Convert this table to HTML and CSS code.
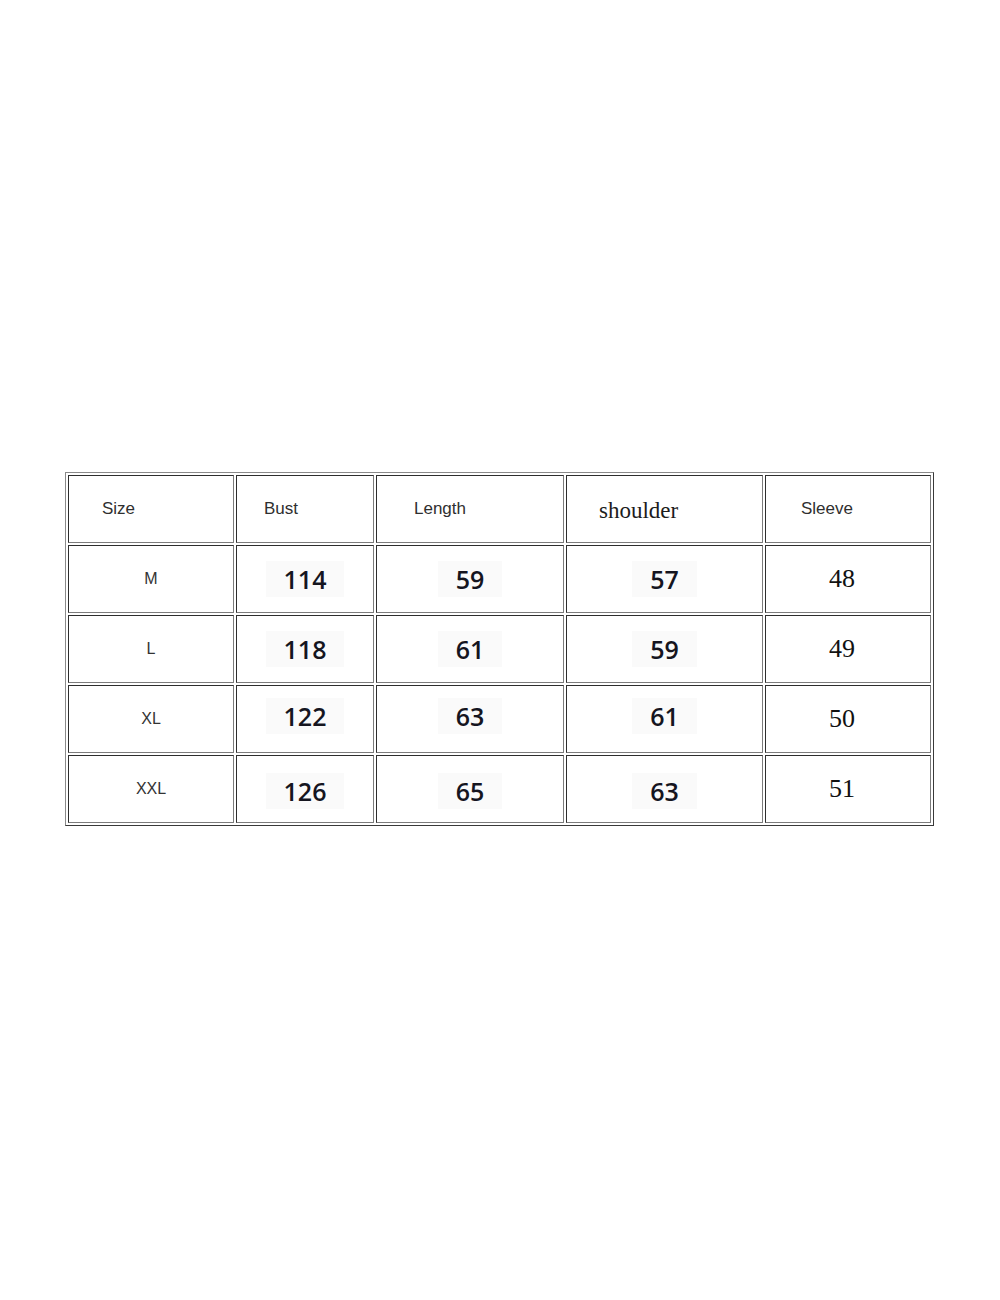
FILE: index.html
```html
<!DOCTYPE html>
<html>
<head>
<meta charset="utf-8">
<link rel="stylesheet" href="styles.css">
</head>
<body>
<div class="page">
<table class="sizes">
  <tr class="head">
    <td class="c1"><span class="h h-size">Size</span></td>
    <td class="c2"><span class="h h-bust">Bust</span></td>
    <td class="c3"><span class="h h-length">Length</span></td>
    <td class="c4"><span class="h-shoulder">shoulder</span></td>
    <td class="c5"><span class="h h-sleeve">Sleeve</span></td>
  </tr>
  <tr>
    <td class="c1 sz">M</td>
    <td class="c2"><span class="num">114</span></td>
    <td class="c3"><span class="num">59</span></td>
    <td class="c4"><span class="num">57</span></td>
    <td class="c5 serifnum">48</td>
  </tr>
  <tr>
    <td class="c1 sz">L</td>
    <td class="c2"><span class="num">118</span></td>
    <td class="c3"><span class="num">61</span></td>
    <td class="c4"><span class="num">59</span></td>
    <td class="c5 serifnum">49</td>
  </tr>
  <tr class="up">
    <td class="c1 sz">XL</td>
    <td class="c2"><span class="num">122</span></td>
    <td class="c3"><span class="num">63</span></td>
    <td class="c4"><span class="num">61</span></td>
    <td class="c5 serifnum">50</td>
  </tr>
  <tr class="down">
    <td class="c1 sz">XXL</td>
    <td class="c2"><span class="num">126</span></td>
    <td class="c3"><span class="num">65</span></td>
    <td class="c4"><span class="num">63</span></td>
    <td class="c5 serifnum">51</td>
  </tr>
</table>
</div>
</body>
</html>
```
FILE: styles.css
```css
html, body {
  margin: 0;
  padding: 0;
  background: #ffffff;
}
.page {
  padding: 472px 0 0 65px;
}
.sizes {
  border-collapse: separate;
  border-spacing: 2px;
  border-top: 1px solid #8a8a8a;
  border-left: 1px solid #8a8a8a;
  border-right: 1px solid #3a3a3a;
  border-bottom: 1px solid #3a3a3a;
  table-layout: fixed;
  width: 869px;
}
.sizes td {
  border-top: 1px solid #2e2e2e;
  border-left: 1px solid #2e2e2e;
  border-right: 1px solid #7c7c7c;
  border-bottom: 1px solid #7c7c7c;
  height: 68px;
  padding: 0;
  text-align: center;
  vertical-align: middle;
  box-sizing: border-box;
}
.c1 { width: 166px; }
.c2 { width: 138px; }
.c3 { width: 188px; }
.c4 { width: 197px; }
.c5 { width: 166px; }

.head td { text-align: left; }
.h {
  font-family: "Liberation Sans", Arial, sans-serif;
  font-size: 17px;
  color: #2f2f2f;
}
.h-size { padding-left: 33px; }
.h-bust { padding-left: 27px; }
.h-length { padding-left: 37px; }
.h-sleeve { padding-left: 35px; }
.h-shoulder {
  font-family: "Liberation Serif", "Times New Roman", serif;
  font-size: 23px;
  color: #1c1c1c;
  padding-left: 32px;
  position: relative;
  top: 2px;
}
.sz {
  font-family: "Liberation Sans", Arial, sans-serif;
  font-size: 16px;
  color: #333333;
  padding-top: 2px;
}
.num {
  display: inline-block;
  font-family: "Open Sans", "Noto Sans", sans-serif;
  font-weight: 600;
  font-size: 25px;
  line-height: 34px;
  color: #15151f;
  background: #fafafa;
  padding: 1px 18px 1px 18px;
}
.up .num { margin-top: -6px; }
.down .num { margin-top: 4px; }
.sizes td.serifnum {
  font-family: "Liberation Serif", "Times New Roman", serif;
  font-size: 26px;
  font-weight: normal;
  color: #111111;
  padding-right: 12px;
}
```
